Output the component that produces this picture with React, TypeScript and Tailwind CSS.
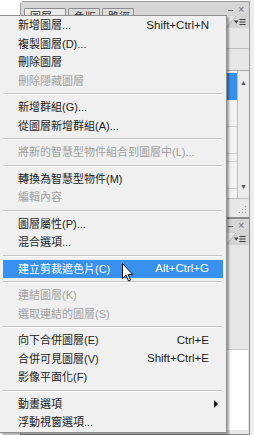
import React from 'react';

type MenuEntry =
  | { kind: 'item'; label: string; shortcut?: string; disabled?: boolean; active?: boolean; submenu?: boolean }
  | { kind: 'sep' };

const entries: MenuEntry[] = [
  { kind: 'item', label: '新增圖層...', shortcut: 'Shift+Ctrl+N' },
  { kind: 'item', label: '複製圖層(D)...' },
  { kind: 'item', label: '刪除圖層' },
  { kind: 'item', label: '刪除隱藏圖層', disabled: true },
  { kind: 'sep' },
  { kind: 'item', label: '新增群組(G)...' },
  { kind: 'item', label: '從圖層新增群組(A)...' },
  { kind: 'sep' },
  { kind: 'item', label: '將新的智慧型物件組合到圖層中(L)...', disabled: true },
  { kind: 'sep' },
  { kind: 'item', label: '轉換為智慧型物件(M)' },
  { kind: 'item', label: '編輯內容', disabled: true },
  { kind: 'sep' },
  { kind: 'item', label: '圖層屬性(P)...' },
  { kind: 'item', label: '混合選項...' },
  { kind: 'sep' },
  { kind: 'item', label: '建立剪裁遮色片(C)', shortcut: 'Alt+Ctrl+G', active: true },
  { kind: 'sep' },
  { kind: 'item', label: '連結圖層(K)', disabled: true },
  { kind: 'item', label: '選取連結的圖層(S)', disabled: true },
  { kind: 'sep' },
  { kind: 'item', label: '向下合併圖層(E)', shortcut: 'Ctrl+E' },
  { kind: 'item', label: '合併可見圖層(V)', shortcut: 'Shift+Ctrl+E' },
  { kind: 'item', label: '影像平面化(F)' },
  { kind: 'sep' },
  { kind: 'item', label: '動畫選項', submenu: true },
  { kind: 'item', label: '浮動視窗選項...' },
];

function PanelMenuIcon() {
  return (
    <svg width="12" height="8" viewBox="0 0 12 8">
      <path d="M0 2.5h4.5L2.25 5.5z" fill="#3c3c3c" />
      <path d="M5.5 1.5h6M5.5 4h6M5.5 6.5h6" stroke="#3c3c3c" strokeWidth="1" />
    </svg>
  );
}

function WindowButtons() {
  return (
    <div className="flex items-center gap-[5px] text-[10px] leading-none text-[#6a6a6a]">
      <span className="block w-[5px] h-px bg-[#6a6a6a]" />
      <span>×</span>
    </div>
  );
}

// the little wedge with the panel menu button under the tab bar
function MenuWedge() {
  return (
    <div className="relative w-[23px] h-[12px]">
      <svg width="23" height="12" viewBox="0 0 23 12" className="absolute inset-0">
        <path d="M0 12 L10 0 L23 0 L23 12 Z" fill="#d4d4d4" />
        <path d="M0 12 L10 0" stroke="#b4b4b4" strokeWidth="1" />
      </svg>
      <div className="absolute right-[3px] top-[2px]">
        <PanelMenuIcon />
      </div>
    </div>
  );
}

function Grip() {
  return (
    <svg width="9" height="9" viewBox="0 0 9 9">
      {[
        [7, 1], [7, 4], [4, 4], [7, 7], [4, 7], [1, 7],
      ].map(([x, y], i) => (
        <rect key={i} x={x} y={y} width="1" height="1" fill="#9a9a9a" />
      ))}
    </svg>
  );
}

function Cursor() {
  return (
    <svg width="12" height="19" viewBox="0 0 12 19" className="absolute left-[122px] top-[263px]">
      <path
        d="M0.5 0.5 L0.5 15.5 L4 12.2 L6.6 18 L8.6 17.1 L6.1 11.5 L10.8 11.5 Z"
        fill="#fff"
        stroke="#111"
        strokeWidth="1"
        strokeLinejoin="round"
      />
    </svg>
  );
}

function Menu() {
  return (
    <div className="absolute left-0 top-[15px] w-[227px] border-t border-r border-b border-[#8f8f8f] bg-[#f0f0f0] shadow-[2px_2px_2px_rgba(0,0,0,0.35)]">
      {entries.map((e, i) => {
        if (e.kind === 'sep') {
          return (
            <div key={i} className="h-[8px] mx-[3px] mr-[4px] flex flex-col justify-center">
              <div className="h-px bg-[#c4c4c4]" />
              <div className="h-px bg-white" />
            </div>
          );
        }
        const tone = e.active ? 'bg-[#3890ef] text-white' : e.disabled ? 'text-[#a0a0a0]' : 'text-[#1c1c1c]';
        return (
          <div key={i} className={`h-[18.5px] mx-[3px] flex items-center pl-[15px] pr-[14px] text-[11px] ${tone}`}>
            <span className="whitespace-nowrap">{e.label}</span>
            {e.shortcut && <span className="ml-auto text-[11.5px] whitespace-nowrap">{e.shortcut}</span>}
            {e.submenu && (
              <span className="ml-auto mr-[-9px] w-0 h-0 border-y-[4px] border-y-transparent border-l-[4px] border-l-[#111]" />
            )}
          </div>
        );
      })}
    </div>
  );
}

export default function App() {
  return (
    <div className="relative w-[254px] h-[435px] overflow-hidden bg-white font-['Liberation_Sans','Noto_Sans_CJK_TC',sans-serif]">
      {/* panels behind the menu */}
      <div className="flex h-full">
        <div className="w-[20px] bg-white" />
        <div className="flex-1 flex flex-col">
          {/* layers panel */}
          <div className="mt-[1px] h-[216px] flex flex-col border border-b-0 border-[#9a9a9a] rounded-tl-[4px] bg-[#e7e7e7]">
            <div className="h-[14px] flex items-end bg-[#d6d6d6] pl-[3px] gap-[2px]">
              <div className="h-[8px] w-[42px] border border-b-0 border-[#8c8c8c] rounded-t-[2px] bg-[#ececec] pl-[5px] pt-[3px] text-[11px] leading-[11px] text-[#333] whitespace-nowrap">
                圖層 ×
              </div>
              <div className="h-[8px] w-[32px] border border-b-0 border-[#8c8c8c] rounded-t-[2px] bg-[#dcdcdc] pl-[5px] pt-[3px] text-[11px] leading-[11px] text-[#333] whitespace-nowrap">
                色版
              </div>
              <div className="h-[8px] w-[32px] border border-b-0 border-[#8c8c8c] rounded-t-[2px] bg-[#dcdcdc] pl-[5px] pt-[3px] text-[11px] leading-[11px] text-[#333] whitespace-nowrap">
                路徑
              </div>
              <div className="ml-auto self-start pt-[3px] pr-[5px]">
                <WindowButtons />
              </div>
            </div>
            <div className="h-[32px] flex justify-end">
              <MenuWedge />
            </div>
            <div className="h-[22px] border-t border-[#bdbdbd]" />
            <div className="h-[128px] flex border-t border-[#a8a8a8]">
              <div className="flex-1 flex flex-col bg-[#f3f3f3] pt-[2px]">
                <div className="h-[27px] bg-[#3b8fea]" />
                <div className="h-[27px] border-b border-[#cfcfcf]" />
                <div className="h-[27px] border-b border-[#cfcfcf]" />
                <div className="h-[8px] border-b border-[#cfcfcf]" />
                <div className="h-[27px] border-b border-[#cfcfcf]" />
              </div>
              <div className="w-[12px] flex flex-col items-center justify-between border-l border-[#bdbdbd] bg-[#ececec] py-[8px] text-[7px] leading-none text-[#555]">
                <span>▲</span>
                <span>▼</span>
              </div>
            </div>
            <div className="flex-1 flex items-end justify-end pr-[2px] pb-[3px] border-t border-[#bdbdbd]">
              <Grip />
            </div>
          </div>
          {/* second panel */}
          <div className="flex-1 flex flex-col border border-t-2 border-[#8a8a8a] bg-[#e7e7e7]">
            <div className="h-[14px] flex items-center justify-end pr-[5px] bg-[#d6d6d6]">
              <WindowButtons />
            </div>
            <div className="h-[16px] flex justify-end">
              <MenuWedge />
            </div>
            <div className="h-[100px]" />
            <div className="flex-1 mb-[4px] mr-[1px] bg-white border-t border-[#c8c8c8]" />
          </div>
        </div>
        <div className="w-[4px] bg-[#ededed]" />
      </div>

      <Menu />
      <Cursor />
    </div>
  );
}
